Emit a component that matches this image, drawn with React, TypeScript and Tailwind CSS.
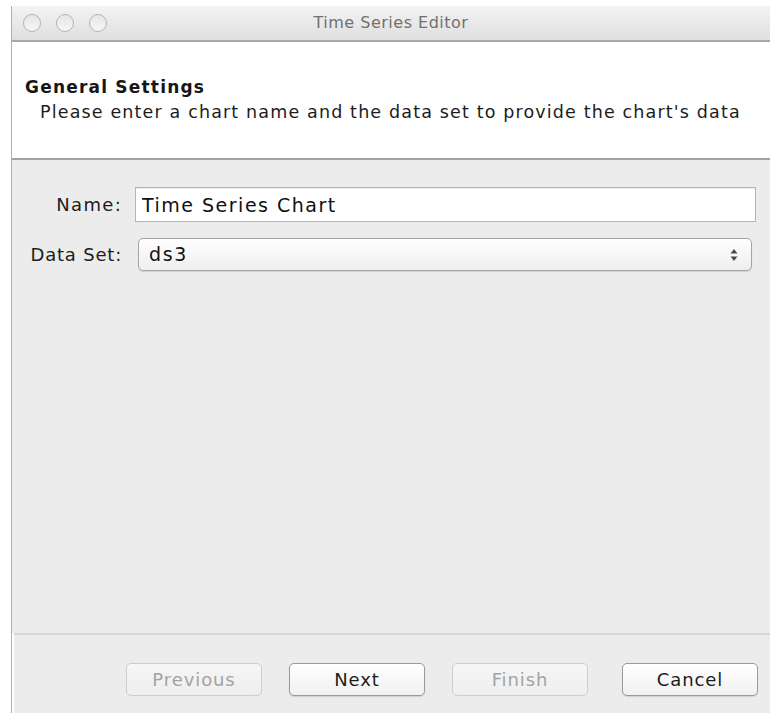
const font = { fontFamily: '"DejaVu Sans", "Liberation Sans", sans-serif' }

const TrafficLight = () => (
  <span className="block w-[18px] h-[18px] rounded-full border-[1.5px] border-[#b4b4b4] bg-gradient-to-b from-[#e6e6e6] to-[#f6f6f6]" />
)

const WizardButton = ({ label, disabled, className = '' }: { label: string, disabled?: boolean, className?: string }) => (
  <button
    type="button"
    disabled={disabled}
    className={
      (disabled
        ? 'w-[136px] h-[33px] rounded-[5px] border border-[#cdcdcd] bg-gradient-to-b from-[#f6f6f6] to-[#eeeeee] text-[18px] tracking-[0.9px] text-[#a3a3a3] '
        : 'w-[136px] h-[33px] rounded-[5px] border border-[#9a9a9a] bg-gradient-to-b from-white to-[#f1f1f1] text-[18px] tracking-[0.9px] text-[#1c1c1c] shadow-[0_1px_1px_rgba(0,0,0,0.12)] ') + className
    }
    style={font}
  >
    {label}
  </button>
)

const App = () => {
  return (
    <div className="w-[770px] h-[713px] bg-white pt-[6px] pl-[11px] overflow-hidden" style={font}>
      <div className="flex flex-col h-full border-l border-[#b0b0b0]">

        {/* Title bar */}
        <div className="relative h-[36px] shrink-0 bg-gradient-to-b from-[#f3f3f3] to-[#dfdfdf] border-b-2 border-[#a8a8a8] flex items-center justify-center">
          <div className="absolute left-[11px] top-[8px] flex gap-[15px]">
            <TrafficLight />
            <TrafficLight />
            <TrafficLight />
          </div>
          <span className="text-[16px] text-[#717171] tracking-[0.5px]">Time Series Editor</span>
        </div>

        {/* Page header */}
        <div className="h-[118px] shrink-0 bg-white border-b-2 border-[#a3a3a3] pl-[13px] pt-[35px]">
          <h2 className="text-[17px] font-bold text-[#161616] leading-[20px] tracking-[1.2px]">General Settings</h2>
          <p className="text-[17.5px] text-[#1c1c1c] leading-[20px] mt-[5px] pl-[15px] tracking-[1.15px] whitespace-nowrap">
            Please enter a chart name and the data set to provide the chart's data
          </p>
        </div>

        {/* Form */}
        <div className="flex-1 bg-[#ececec] pt-[27px] pr-[14px]">
          <div className="grid grid-cols-[110px_1fr] gap-x-[13px] gap-y-[16px] items-center">
            <label className="text-right text-[18px] tracking-[1.3px] text-[#1c1c1c]">Name:</label>
            <input
              type="text"
              defaultValue="Time Series Chart"
              className="h-[35px] bg-white border border-[#b5b5b5] shadow-[inset_0_1px_1px_rgba(0,0,0,0.08)] px-[6px] text-[19px] tracking-[1.5px] text-[#111] outline-none"
              style={font}
            />
            <label className="text-right text-[18px] tracking-[0.8px] text-[#1c1c1c]">Data Set:</label>
            <div className="ml-[3px] mr-[4px] h-[33px] rounded-[5px] border border-[#a5a5a5] bg-gradient-to-b from-white to-[#eeeeee] shadow-[0_1px_1px_rgba(0,0,0,0.12)] flex items-center justify-between pl-[10px] pr-[13px]">
              <span className="text-[19px] tracking-[1.6px] text-[#111]">ds3</span>
              <svg width="8" height="14" viewBox="0 0 8 14">
                <path d="M4 1 L7.5 5.5 L0.5 5.5 Z" fill="#4a4a4a" />
                <path d="M4 13 L7.5 8.5 L0.5 8.5 Z" fill="#4a4a4a" />
              </svg>
            </div>
          </div>
        </div>

        {/* Footer buttons */}
        <div className="h-[80px] shrink-0 bg-[#ececec] ml-[2px] border-t-2 border-[#d8d8d8] flex justify-end gap-[27px] pr-[12px] pt-[28px]">
          <WizardButton label="Previous" disabled />
          <WizardButton label="Next" />
          <WizardButton label="Finish" disabled />
          <WizardButton label="Cancel" className="ml-[7px]" />
        </div>

      </div>
    </div>
  )
}

export default App
